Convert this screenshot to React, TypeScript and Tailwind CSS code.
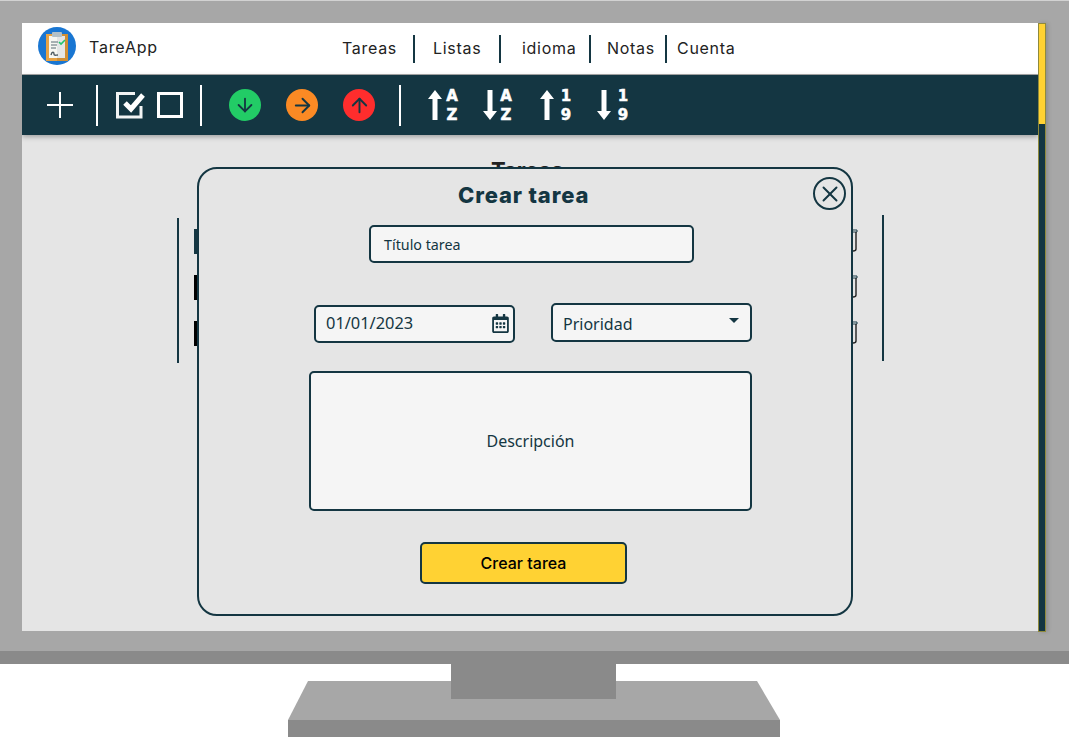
import { ArrowDown, ArrowRight, ArrowUp, X } from "lucide-react";
import { FaRegCalendarAlt } from "react-icons/fa";

const navItems = [
  { label: "Tareas", width: "w-[73px]", pad: "pl-0" },
  { label: "Listas", width: "w-[86px]", pad: "pl-[18px]" },
  { label: "idioma", width: "w-[90px]", pad: "pl-[21px]" },
  { label: "Notas", width: "w-[76px]", pad: "pl-[16px]" },
  { label: "Cuenta", width: "w-[80px]", pad: "pl-[10px]" },
];

const Logo = () => (
  <svg width="38" height="38" viewBox="0 0 38 38" className="shrink-0 self-start mt-[4px]">
    <circle cx="19" cy="19" r="19" fill="#1976d2" />
    <rect x="8" y="7" width="22" height="27" fill="#e6a244" />
    <path d="M19 7h11v27H19z" fill="#d08f35" />
    <rect x="11" y="9" width="16" height="22" fill="#f7f7f2" />
    <path d="M19 9h8v22h-8z" fill="#e4e6e6" />
    <rect x="14" y="5" width="10" height="5" rx="1" fill="#b3c0c7" />
    <path d="M13 15h7M13 18h6M13 21h5" stroke="#5b6b75" strokeWidth="1" />
    <path d="M21 15l2 2 4-4" stroke="#22c56b" strokeWidth="1.6" fill="none" />
    <path d="M13 28c1-4 3-3 3-1s2 1 4 1" stroke="#4d5a61" strokeWidth="1.4" fill="none" />
  </svg>
);

const SortIcon = ({ up, top, bottom, className }: { up: boolean; top: string; bottom: string; className: string }) => (
  <div className={`flex items-center ${className}`}>
    <svg width="14" height="32" viewBox="0 0 14 32">
      {up ? (
        <path d="M7 1 L14 10 H9.5 V31 H4.5 V10 H0 Z" fill="#fff" />
      ) : (
        <path d="M7 31 L14 22 H9.5 V1 H4.5 V22 H0 Z" fill="#fff" />
      )}
    </svg>
    <div className="flex flex-col items-center justify-between h-[33px] w-[12px] text-white font-bold text-[15px] leading-[14px] [-webkit-text-stroke:0.5px_white] font-['DejaVu_Sans',sans-serif]">
      <span>{top}</span>
      <span>{bottom}</span>
    </div>
  </div>
);

const Divider = ({ className }: { className: string }) => <div className={`w-[2px] bg-white ${className}`} />;

const Pin = () => (
  <svg width="7" height="23" viewBox="0 0 7 23">
    <path d="M0 1h6v2H0z" fill="#f5f5f5" stroke="#143642" strokeWidth="1" />
    <path d="M5 3v17c0 1-1 2-3 2" fill="none" stroke="#222" strokeWidth="1.4" />
  </svg>
);

const taskRows = ["bg-[#143642]", "bg-black", "bg-black"];

export default function App() {
  return (
    <div className="relative w-[1069px] h-[738px] bg-white overflow-hidden">
      <div className="h-[651px] bg-[#a7a7a7] border-t border-[#d2d2d2] pt-[22px] pl-[22px]">
        <div className="flex w-[1024px] h-[608px]">
          <div className="relative w-[1016px] h-full bg-[#e5e5e5] overflow-hidden">
            <header className="flex items-center h-[52px] bg-white border-b border-[#a8a8a8] pl-[16px] font-['Inter',sans-serif] text-[#222]">
              <Logo />
              <span className="ml-[13px] w-[253px] pb-[3px] text-[16px] tracking-[0.8px]">TareApp</span>
              <nav className="flex items-center">
                {navItems.map((item, i) => (
                  <div
                    key={item.label}
                    className={`flex items-center h-[28px] pb-[2px] text-[16px] tracking-[0.7px] ${item.width} ${item.pad} ${
                      i < navItems.length - 1 ? "border-r-2 border-[#143642]" : ""
                    }`}
                  >
                    {item.label}
                  </div>
                ))}
              </nav>
            </header>

            <div className="flex items-center h-[60px] bg-[#143642] shadow-[0_2px_5px_rgba(0,0,0,0.3)]">
              <svg width="26" height="26" viewBox="0 0 26 26" className="ml-[25px]">
                <path d="M13 0v26M0 13h26" stroke="#fff" strokeWidth="2" />
              </svg>
              <Divider className="h-[41px] ml-[23px]" />
              <svg width="30" height="28" viewBox="0 0 30 28" className="ml-[18px]">
                <path d="M19 2.5H1.5V26H25V15" fill="none" stroke="#f2f4f4" strokeWidth="3" />
                <path d="M9 12l6 6L27 4" fill="none" stroke="#fff" strokeWidth="5" />
              </svg>
              <div className="w-[26px] h-[26px] ml-[11px] border-[3px] border-white" />
              <Divider className="h-[41px] ml-[17px]" />
              <div className="flex items-center justify-center w-[32px] h-[32px] ml-[27px] rounded-full bg-[#22cc66] text-[#143642]">
                <ArrowDown size={22} strokeWidth={2} />
              </div>
              <div className="flex items-center justify-center w-[32px] h-[32px] ml-[25px] rounded-full bg-[#fb8a24] text-[#143642]">
                <ArrowRight size={23} strokeWidth={2} />
              </div>
              <div className="flex items-center justify-center w-[32px] h-[32px] ml-[25px] rounded-full bg-[#ff2d2d] text-[#143642]">
                <ArrowUp size={23} strokeWidth={2} />
              </div>
              <Divider className="h-[41px] ml-[24px]" />
              <div className="flex items-center ml-[27px]">
                <SortIcon up top="A" bottom="Z" className="gap-[4px] mr-[25px]" />
                <SortIcon up={false} top="A" bottom="Z" className="gap-[3px] mr-[28px]" />
                <SortIcon up top="1" bottom="9" className="gap-[6px] mr-[25px]" />
                <SortIcon up={false} top="1" bottom="9" className="gap-[6px]" />
              </div>
            </div>

            {/* lista de tareas detras del modal */}
            <h1 className="mt-[22px] ml-[469px] text-[22px] leading-[26px] font-bold text-[#222] font-['Inter',sans-serif]">
              Tareas
            </h1>
            <div className="flex ml-[155px] mt-[30px]">
              <div className="w-[2px] h-[145px] mt-[5px] bg-[#143642]" />
              <div className="flex flex-col gap-[21px] w-[664px] ml-[15px] mt-[16px]">
                {taskRows.map((color, i) => (
                  <div key={i} className="flex items-start justify-between h-[25px]">
                    <div className={`w-[5px] h-[25px] ${color}`} />
                    <Pin />
                  </div>
                ))}
              </div>
              <div className="w-[2px] h-[146px] mt-[2px] ml-[24px] bg-[#143642]" />
            </div>

            {/* modal crear tarea */}
            <div className="absolute left-[175px] top-[144px] w-[656px] h-[449px] rounded-[20px] border-2 border-[#143642] bg-[#e5e5e5] text-[#143642]">
              <button className="absolute left-[614px] top-[8px] flex items-center justify-center w-[33px] h-[33px] rounded-full border-2 border-[#143642]">
                <X size={26} strokeWidth={1.8} />
              </button>
              <h2 className="mt-[12px] ml-[259px] text-[22px] leading-[28px] tracking-[0.85px] font-extrabold font-['Inter',sans-serif]">
                Crear tarea
              </h2>
              <div className="flex items-center w-[325px] h-[38px] mt-[16px] ml-[170px] pl-[13px] pt-[2px] rounded-[5px] border-2 border-[#143642] bg-[#f5f5f5] text-[14.3px] font-['Noto_Sans',sans-serif]">
                Título tarea
              </div>
              <div className="flex items-start mt-[40px] ml-[115px]">
                <div className="flex items-center justify-between w-[201px] h-[38px] mt-[2px] pl-[10px] pr-[3px] pb-[2px] rounded-[5px] border-2 border-[#143642] bg-[#f5f5f5] text-[16.4px] font-['Noto_Sans',sans-serif]">
                  01/01/2023
                  <FaRegCalendarAlt size={19} />
                </div>
                <div className="relative flex items-center w-[201px] h-[39px] ml-[36px] pl-[10px] pt-[2px] rounded-[5px] border-2 border-[#143642] bg-[#f5f5f5] text-[16px] font-['Noto_Sans',sans-serif]">
                  Prioridad
                  <div className="absolute right-[11px] top-[13px] w-0 h-0 border-x-[5px] border-t-[5px] border-x-transparent border-t-[#143642]" />
                </div>
              </div>
              <div className="flex items-center justify-center w-[443px] h-[140px] mt-[28px] ml-[110px] rounded-[5px] border-2 border-[#143642] bg-[#f5f5f5] text-[16px] font-['Noto_Sans',sans-serif]">
                Descripción
              </div>
              <button className="block w-[207px] h-[42px] mt-[31px] ml-[221px] rounded-[5px] border-2 border-[#143642] bg-[#ffd233] text-[16px] font-medium text-black font-['Inter',sans-serif]">
                Crear tarea
              </button>
            </div>
          </div>

          {/* scrollbar */}
          <div className="flex flex-col w-[8px] h-[609px] border border-[#8f8a3c] shadow-[2px_0_4px_rgba(0,0,0,0.15)]">
            <div className="h-[100px] bg-[#ffd233]" />
            <div className="flex-1 bg-[#143642]" />
          </div>
        </div>
      </div>
      <div className="h-[13px] bg-[#8a8a8a]" />
      {/* pie del monitor */}
      <svg width="1069" height="74" viewBox="0 0 1069 74" className="block">
        <path d="M308 17H757L780 56V73H288V56Z" fill="#a7a7a7" />
        <rect x="288" y="56" width="492" height="17" fill="#8a8a8a" />
        <rect x="451" y="0" width="165" height="35" fill="#8a8a8a" />
      </svg>
    </div>
  );
}
